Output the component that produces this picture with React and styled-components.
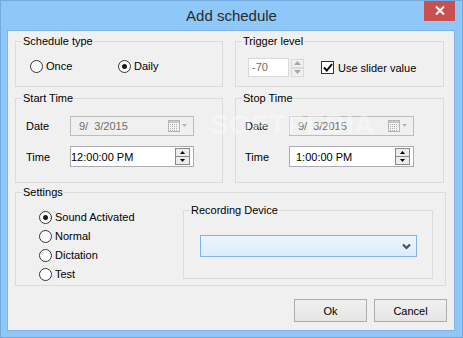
import React from "react";
import styled, { createGlobalStyle } from "styled-components";

const GlobalStyle = createGlobalStyle`
  html, body { margin: 0; padding: 0; background: #8ec8f8; }
  body {
    font-family: "Liberation Sans", Arial, sans-serif;
    font-size: 11px;
    color: #000;
  }
  * { box-sizing: border-box; }
`;

// window frame
const Window = styled.div`
  position: relative;
  width: 463px;
  height: 338px;
  background: #8ec8f8;
  border: 1px solid #74a9dd;
  display: flex;
  flex-direction: column;
  overflow: hidden;
`;
const TitleBar = styled.div`
  height: 29px;
  display: grid;
  grid-template-columns: 1fr auto 1fr;
`;
const Title = styled.div`
  grid-column: 2;
  font-size: 15px;
  line-height: 29px;
  color: #2b2b2b;
`;
const Close = styled.div`
  grid-column: 3;
  justify-self: end;
  align-self: start;
  margin: -1px 7px 0 0;
  width: 31px;
  height: 21px;
  background: #c75050;
  display: flex;
  align-items: center;
  justify-content: center;
`;
const Client = styled.div`
  margin: 0 7px 0 6px;
  height: 301px;
  border: 1px solid #7fb3e5;
  background: #f0f0f0;
  padding: 4px 7px 0 7px;
  display: flex;
  flex-direction: column;
`;

// group boxes
const TopGrid = styled.div`
  display: grid;
  grid-template-columns: 208px 209px;
  column-gap: 12px;
  row-gap: 5px;
`;
const Group = styled.fieldset`
  margin: 0;
  padding: 0;
  min-width: 0;
  border: 1px solid #dcdcdc;
  height: ${(p) => p.$h}px;
  width: ${(p) => (p.$w ? `${p.$w}px` : "auto")};
`;
const Legend = styled.legend`
  margin-left: 6px;
  padding: 0 1px;
  line-height: 13px;
  font-size: 11px;
`;
const Inner = styled.div`
  display: flex;
  flex-direction: ${(p) => p.$dir || "row"};
  align-items: ${(p) => p.$align || "center"};
  padding: ${(p) => p.$pad};
`;

// radio / checkbox
const Choice = styled.label`
  display: flex;
  align-items: center;
  gap: 3px;
  width: ${(p) => (p.$w ? `${p.$w}px` : "auto")};
  height: 13px;
  line-height: 13px;
`;
const RadioCircle = styled.span`
  width: 13px;
  height: 13px;
  border-radius: 50%;
  border: 1px solid #333;
  background: #fff;
  display: flex;
  align-items: center;
  justify-content: center;
  flex-shrink: 0;
  &::after {
    content: "";
    width: 5px;
    height: 5px;
    border-radius: 50%;
    background: ${(p) => (p.$on ? "#1a1a1a" : "transparent")};
  }
`;
const CheckBox = styled.span`
  width: 13px;
  height: 13px;
  border: 1px solid #333;
  background: #fff;
  display: flex;
  align-items: center;
  justify-content: center;
  flex-shrink: 0;
  margin-left: 17px;
`;
const CheckText = styled.span`
  margin-left: 4px;
`;

// fields
const NumField = styled.div`
  width: 41px;
  height: 19px;
  border: 1px solid #d9d9d9;
  background: #fff;
  color: #6d6d6d;
  padding-left: 3px;
  line-height: 17px;
`;
const SpinStack = styled.div`
  display: flex;
  flex-direction: column;
  gap: ${(p) => (p.$inset ? 0 : 1)}px;
  margin-left: ${(p) => (p.$inset ? "auto" : "2px")};
`;
const SpinBtn = styled.div`
  width: ${(p) => (p.$inset ? 15 : 13)}px;
  height: ${(p) => (p.$inset ? 9 : 9)}px;
  border: 1px solid ${(p) => (p.$inset ? "#8a8a8a" : "#dadada")};
  background: ${(p) => (p.$inset ? "#ececec" : "#f0f0f0")};
  display: flex;
  align-items: center;
  justify-content: center;
  & + & {
    margin-top: ${(p) => (p.$inset ? "-1px" : "0")};
  }
`;
const FieldRow = styled.div`
  display: flex;
  align-items: center;
  & + & {
    margin-top: 10px;
  }
`;
const FieldLabel = styled.span`
  width: 44px;
`;
const DateBox = styled.div`
  width: ${(p) => p.$w}px;
  height: ${(p) => (p.$disabled ? 20 : 21)}px;
  border: 1px solid ${(p) => (p.$disabled ? "#bcbcbc" : "#abadb3")};
  background: ${(p) => (p.$disabled ? "#f0f0f0" : "#fff")};
  color: ${(p) => (p.$disabled ? "#6d6d6d" : "#000")};
  display: flex;
  align-items: center;
  padding: 0 3px 0 ${(p) => (p.$disabled ? 2 : 0)}px;
`;
const Pad = styled.span`
  display: inline-block;
  width: 6px;
`;
const Value = styled.span`
  flex: 1;
  white-space: pre;
`;

// settings
const Settings = styled(Group)`
  margin-top: 3px;
`;
const RadioColumn = styled.div`
  width: 167px;
  padding: 12px 0 0 23px;
  display: flex;
  flex-direction: column;
  gap: 6px;
`;
const DeviceGroup = styled(Group)`
  margin-top: 5px;
`;
const Select = styled.div`
  width: 217px;
  height: 22px;
  border: 1px solid #7eb4ea;
  background: linear-gradient(#ecf4fc, #dcecfc);
  display: flex;
  align-items: center;
  justify-content: flex-end;
  padding-right: 5px;
`;

// buttons
const ButtonRow = styled.div`
  margin-top: 13px;
  display: flex;
  justify-content: flex-end;
  gap: 7px;
`;
const Button = styled.button`
  width: 73px;
  height: 23px;
  border: 1px solid #acacac;
  background: linear-gradient(#f0f0f0, #e5e5e5);
  font-family: inherit;
  font-size: 11px;
  color: #000;
  padding: 0;
`;
const Watermark = styled.div`
  position: absolute;
  left: 209px;
  top: 108px;
  font-size: 28px;
  font-weight: bold;
  color: rgba(255, 255, 255, 0.4);
  pointer-events: none;
  letter-spacing: 0.5px;
`;

const Arrow = ({ up, color, small }) => {
  const w = small ? 5 : 7;
  const h = small ? 3 : 4;
  return (
    <svg width={w} height={h} viewBox={`0 0 ${w} ${h}`}>
      <path
        d={up ? `M0 ${h} L${w / 2} 0 L${w} ${h} Z` : `M0 0 L${w} 0 L${w / 2} ${h} Z`}
        fill={color}
      />
    </svg>
  );
};

const CalendarIcon = () => (
  <svg width="22" height="12" viewBox="0 0 22 12">
    <rect x="0.5" y="0.5" width="11" height="11" fill="#f4f4f4" stroke="#b4b4b4" />
    <rect x="1" y="1" width="10" height="2" fill="#c8c8c8" />
    {[3, 5, 7, 9].map((y) =>
      [2, 4, 6, 8].map((x) => (
        <rect key={`${x}-${y}`} x={x} y={y + 1} width="1" height="1" fill="#b0b0b0" />
      ))
    )}
    <path d="M14 4 L19 4 L16.5 7 Z" fill="#b4b4b4" />
  </svg>
);

const Radio = ({ on, w, children }) => (
  <Choice $w={w}>
    <RadioCircle $on={on} />
    {children}
  </Choice>
);

const Spinner = ({ inset, color }) => (
  <SpinStack $inset={inset}>
    <SpinBtn $inset={inset}>
      <Arrow up color={color} small={inset} />
    </SpinBtn>
    <SpinBtn $inset={inset}>
      <Arrow color={color} small={inset} />
    </SpinBtn>
  </SpinStack>
);

const TimeGroup = ({ title, time, w, pad }) => (
  <Group $h={91}>
    <Legend>{title}</Legend>
    <Inner $dir="column" $align="flex-start" $pad={`11px 0 0 ${pad}px`}>
      <FieldRow>
        <FieldLabel>Date</FieldLabel>
        <DateBox $w={w} $disabled>
          <Value>
            <Pad />9/<Pad />3/2015
          </Value>
          <CalendarIcon />
        </DateBox>
      </FieldRow>
      <FieldRow>
        <FieldLabel>Time</FieldLabel>
        <DateBox $w={w}>
          <Value>{time}</Value>
          <Spinner inset color="#000" />
        </DateBox>
      </FieldRow>
    </Inner>
  </Group>
);

export default function App() {
  return (
    <>
      <GlobalStyle />
      <Window>
        <TitleBar>
          <Title>Add schedule</Title>
          <Close>
            <svg width="10" height="9" viewBox="0 0 10 9">
              <path d="M1 0.5 L9 8.5 M9 0.5 L1 8.5" stroke="#fff" strokeWidth="2" />
            </svg>
          </Close>
        </TitleBar>
        <Client>
          <TopGrid>
            <Group $h={52}>
              <Legend>Schedule type</Legend>
              <Inner $pad="12px 0 0 14px">
                <Radio w={88}>Once</Radio>
                <Radio on>Daily</Radio>
              </Inner>
            </Group>
            <Group $h={52}>
              <Legend>Trigger level</Legend>
              <Inner $pad="10px 0 0 12px">
                <NumField>-70</NumField>
                <Spinner color="#a8a8a8" />
                <CheckBox>
                  <svg width="10" height="9" viewBox="0 0 10 9">
                    <path d="M1 4.5 L3.8 7.5 L9 1" fill="none" stroke="#000" strokeWidth="2" />
                  </svg>
                </CheckBox>
                <CheckText>Use slider value</CheckText>
              </Inner>
            </Group>
            <TimeGroup title="Start Time" time="12:00:00 PM" w={124} pad={10} />
            <TimeGroup
              title="Stop Time"
              time={<><Pad />1:00:00 PM</>}
              w={125}
              pad={9}
            />
          </TopGrid>
          <Settings $h={100} $w={431}>
            <Legend>Settings</Legend>
            <Inner $align="flex-start">
              <RadioColumn>
                <Radio on>Sound Activated</Radio>
                <Radio>Normal</Radio>
                <Radio>Dictation</Radio>
                <Radio>Test</Radio>
              </RadioColumn>
              <DeviceGroup $h={75} $w={250}>
                <Legend>Recording Device</Legend>
                <Inner $pad="18px 0 0 16px">
                  <Select>
                    <svg width="9" height="7" viewBox="0 0 9 7">
                      <path d="M1 1.5 L4.5 5 L8 1.5" fill="none" stroke="#4d4d4d" strokeWidth="2.2" />
                    </svg>
                  </Select>
                </Inner>
              </DeviceGroup>
            </Inner>
          </Settings>
          <ButtonRow>
            <Button>Ok</Button>
            <Button>Cancel</Button>
          </ButtonRow>
        </Client>
        <Watermark>SOFTPEDIA</Watermark>
      </Window>
    </>
  );
}
